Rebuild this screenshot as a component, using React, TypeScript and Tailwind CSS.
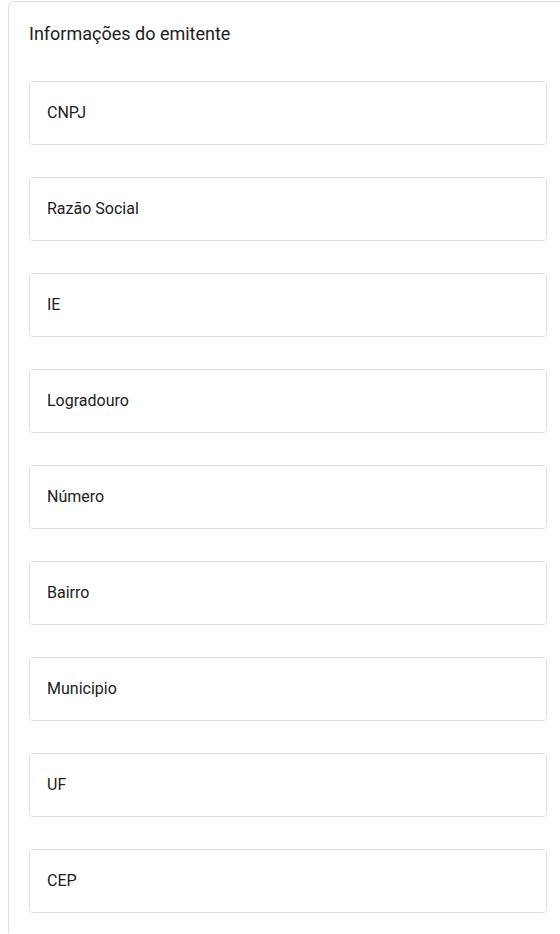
const campos = [
  "CNPJ",
  "Razão Social",
  "IE",
  "Logradouro",
  "Número",
  "Bairro",
  "Municipio",
  "UF",
  "CEP",
];

export default function App() {
  return (
    <div className="h-[934px] w-[560px] overflow-hidden bg-white font-['Roboto',sans-serif] text-[#212121]">
      <div className="ml-2 mt-px w-[560px] rounded-tl-md border border-b-0 border-[#e0e0e0] px-5 pb-5 pt-5">
        <h2 className="mb-[35px] text-[18px] leading-6 font-normal">Informações do emitente</h2>
        <div className="flex flex-col gap-8">
          {campos.map((campo) => (
            <div
              key={campo}
              className="flex h-16 items-center rounded border border-[#e0e0e0] bg-white pl-[17px] text-base"
            >
              {campo}
            </div>
          ))}
        </div>
      </div>
    </div>
  );
}
